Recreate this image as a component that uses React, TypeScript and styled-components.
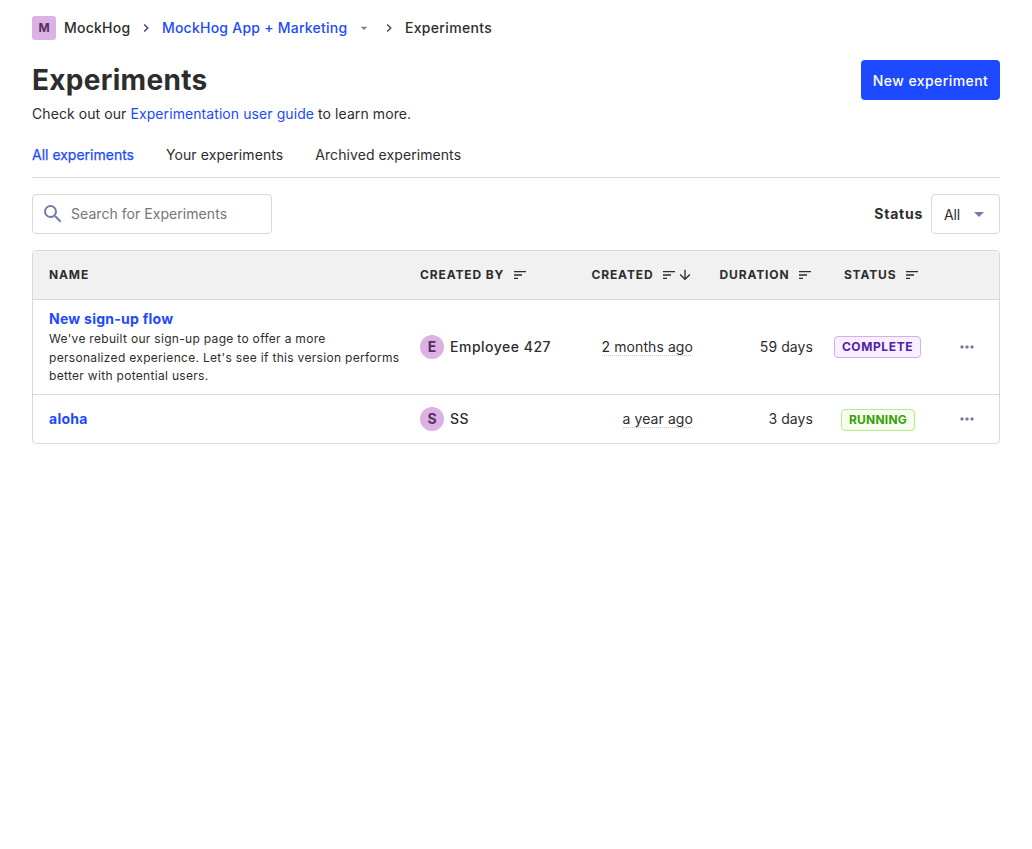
import React from 'react';
import styled, { createGlobalStyle, css } from 'styled-components';
import {
  MdArrowDownward,
  MdArrowDropDown,
  MdChevronRight,
  MdMoreHoriz,
  MdSearch,
  MdSort,
} from 'react-icons/md';

const color = {
  text: '#2d2d2d',
  primary: '#1d4aff',
  muted: '#747ea2',
  border: '#d9d9d9',
  lilac: '#dcb1e3',
  plum: '#572e5e',
};

const GlobalStyle = createGlobalStyle`
  *, *::before, *::after { box-sizing: border-box; }
  body {
    margin: 0;
    background: #fff;
    color: ${color.text};
    font-family: Inter, sans-serif;
    font-size: 14px;
    font-weight: 380;
    line-height: 22px;
    letter-spacing: 0.08px;
  }
  a { color: ${color.primary}; text-decoration: none; }
  svg { display: block; flex-shrink: 0; }
`;

const Page = styled.main`
  padding: 16px 32px;
`;

const Breadcrumbs = styled.nav`
  display: flex;
  align-items: center;
  height: 24px;
  font-weight: 480;
  letter-spacing: 0.24px;
`;

const Crumb = styled.span<{ $link?: boolean }>`
  display: flex;
  align-items: center;
  gap: 9px;
  color: ${(p) => (p.$link ? color.primary : color.text)};
  white-space: nowrap;
  svg { color: ${color.muted}; margin-right: 1px; }
  &:first-child { gap: 8px; }
  &:last-child { letter-spacing: 0.34px; }
`;

const Separator = styled.span`
  margin: 0 8px 0 7.5px;
  color: #35416b;
`;

const Lettermark = styled.span<{ $round?: boolean }>`
  display: flex;
  align-items: center;
  justify-content: center;
  width: 24px;
  height: 24px;
  flex-shrink: 0;
  border-radius: ${(p) => (p.$round ? '50%' : '3px')};
  background: ${color.lilac};
  color: ${color.plum};
  font-size: ${(p) => (p.$round ? 14 : 12)}px;
  font-weight: 700;
  letter-spacing: 0;
`;

const Header = styled.header`
  display: flex;
  justify-content: space-between;
  align-items: center;
  margin-top: 20px;
  height: 40px;
`;

const Title = styled.h1`
  margin: 0;
  font-size: 28px;
  line-height: 40px;
  font-weight: 700;
  letter-spacing: 0.3px;
`;

const PrimaryButton = styled.button`
  width: 139px;
  height: 40px;
  padding: 2px 0 0;
  border: 0;
  border-radius: 4px;
  background: ${color.primary};
  color: #fff;
  font: 450 14px/22px Inter, sans-serif;
  letter-spacing: 0.42px;
  white-space: nowrap;
`;

const Caption = styled.p`
  margin: 3px 0 0;
`;

const Tabs = styled.div`
  display: flex;
  gap: 32px;
  height: 53px;
  padding-top: 19px;
  border-bottom: 1px solid ${color.border};
`;

const Tab = styled.span<{ $active?: boolean }>`
  color: ${(p) => (p.$active ? color.primary : color.text)};
  letter-spacing: ${(p) => (p.$active ? 0 : 0.08)}px;
  -webkit-text-stroke: ${(p) => (p.$active ? '0.25px currentcolor' : '0')};
`;

const Filters = styled.div`
  display: flex;
  justify-content: space-between;
  align-items: center;
  margin: 16px 0;
`;

const control = css`
  display: flex;
  align-items: center;
  height: 40px;
  border: 1px solid ${color.border};
  border-radius: 4px;
  svg { color: ${color.muted}; }
`;

const SearchBox = styled.label`
  ${control}
  width: 240px;
  padding: 0 8px;
  gap: 6px;
`;

const SearchInput = styled.input`
  flex: 1;
  min-width: 0;
  padding: 0;
  border: 0;
  outline: 0;
  font: 380 14px/22px Inter, sans-serif;
  letter-spacing: 0.05px;
  &::placeholder { color: #757575; }
`;

const StatusFilter = styled.div`
  display: flex;
  align-items: center;
  gap: 8px;
  font-weight: 700;
  letter-spacing: 0.75px;
`;

const Select = styled.div`
  ${control}
  width: 69px;
  padding: 2px 8px 0 12px;
  justify-content: space-between;
  font-weight: 380;
  letter-spacing: -0.2px;
  svg { margin-top: -2px; }
`;

const Table = styled.section`
  border: 1px solid ${color.border};
  border-radius: 4px;
  overflow: hidden;
`;

const Row = styled.div`
  display: grid;
  grid-template-columns: 371px 140px 149px 120px 107px 79px;
  align-items: center;
  min-height: 48px;
  & + & { border-top: 1px solid ${color.border}; min-height: 49px; }
`;

const HeadRow = styled(Row)`
  background: #f1f1f1;
  font-size: 12px;
  font-weight: 700;
  letter-spacing: 0.88px;
`;

type Align = 'start' | 'center' | 'end';

const Cell = styled.div<{ $align?: Align; $pad?: number }>`
  display: flex;
  align-items: center;
  justify-content: ${(p) => p.$align ?? 'start'};
  padding-left: ${(p) => p.$pad ?? 0}px;
  white-space: nowrap;
`;

const Sorter = styled.span`
  display: flex;
  margin-left: 7.5px;
`;

const NameCell = styled.div`
  padding: 8px 0 8px 16px;
`;

const NameLink = styled.a`
  display: block;
  font-weight: 700;
  letter-spacing: 0.25px;
`;

const Description = styled.div`
  font-size: 12px;
  line-height: 18.66px;
  letter-spacing: 0.31px;
  white-space: pre-line;
`;

const Person = styled.div`
  display: flex;
  align-items: center;
  gap: 6px;
  font-weight: 480;
  letter-spacing: 0.5px;
  white-space: nowrap;
`;

const Time = styled.span`
  line-height: 17px;
  border-bottom: 1px dotted #c8c8c8;
`;

const Tag = styled.span<{ $tone: 'complete' | 'running' }>`
  height: 22px;
  padding: 0 7px;
  border: 1px solid;
  border-radius: 4px;
  font-size: 12px;
  line-height: 20px;
  font-weight: 700;
  ${(p) =>
    p.$tone === 'complete'
      ? css`color: #531dab; background: #f9f0ff; border-color: #d3adf7; letter-spacing: 0.6px;`
      : css`color: #389e0d; background: #f6ffed; border-color: #b7eb8f; letter-spacing: 0.25px; position: relative; top: 1px; left: 0.5px;`}
`;

const More = styled.span`
  margin-left: 15px;
  color: ${color.muted};
`;

interface Column {
  label: string;
  align?: Align;
  sortable?: boolean;
  sorted?: boolean;
  pad?: number;
}

const columns: Column[] = [
  { label: 'NAME', pad: 16 },
  { label: 'CREATED BY', sortable: true, pad: 16 },
  { label: 'CREATED', align: 'end', sortable: true, sorted: true },
  { label: 'DURATION', align: 'end', sortable: true },
  { label: 'STATUS', align: 'end', sortable: true },
];

interface Experiment {
  name: string;
  description?: string;
  author: string;
  created: string;
  duration: string;
  status: 'complete' | 'running';
}

const experiments: Experiment[] = [
  {
    name: 'New sign-up flow',
    description:
      "We've rebuilt our sign-up page to offer a more\npersonalized experience. Let's see if this version performs\nbetter with potential users.",
    author: 'Employee 427',
    created: '2 months ago',
    duration: '59 days',
    status: 'complete',
  },
  { name: 'aloha', author: 'SS', created: 'a year ago', duration: '3 days', status: 'running' },
];

export default function App() {
  return (
    <Page>
      <GlobalStyle />
      <Breadcrumbs>
        <Crumb><Lettermark>M</Lettermark>MockHog</Crumb>
        <Separator><MdChevronRight size={16} /></Separator>
        <Crumb $link>MockHog App + Marketing<MdArrowDropDown size={16} /></Crumb>
        <Separator><MdChevronRight size={16} /></Separator>
        <Crumb>Experiments</Crumb>
      </Breadcrumbs>
      <Header>
        <Title>Experiments</Title>
        <PrimaryButton>New experiment</PrimaryButton>
      </Header>
      <Caption>
        Check out our <a href="#guide">Experimentation user guide</a> to learn more.
      </Caption>
      <Tabs>
        <Tab $active>All experiments</Tab>
        <Tab>Your experiments</Tab>
        <Tab>Archived experiments</Tab>
      </Tabs>
      <Filters>
        <SearchBox>
          <MdSearch size={24} />
          <SearchInput placeholder="Search for Experiments" />
        </SearchBox>
        <StatusFilter>
          Status
          <Select>All<MdArrowDropDown size={24} /></Select>
        </StatusFilter>
      </Filters>
      <Table>
        <HeadRow>
          {columns.map((c) => (
            <Cell key={c.label} $align={c.align} $pad={c.pad}>
              {c.label}
              {c.sortable && (
                <Sorter>
                  <MdSort size={16} />
                  {c.sorted && <MdArrowDownward size={16} />}
                </Sorter>
              )}
            </Cell>
          ))}
        </HeadRow>
        {experiments.map((e) => (
          <Row key={e.name}>
            <NameCell>
              <NameLink href="#experiment">{e.name}</NameLink>
              {e.description && <Description>{e.description}</Description>}
            </NameCell>
            <Cell $pad={16}>
              <Person><Lettermark $round>{e.author[0]}</Lettermark>{e.author}</Person>
            </Cell>
            <Cell $align="end"><Time>{e.created}</Time></Cell>
            <Cell $align="end">{e.duration}</Cell>
            <Cell $align="center" $pad={22}>
              <Tag $tone={e.status}>{e.status.toUpperCase()}</Tag>
            </Cell>
            <Cell $align="center"><More><MdMoreHoriz size={20} /></More></Cell>
          </Row>
        ))}
      </Table>
    </Page>
  );
}
